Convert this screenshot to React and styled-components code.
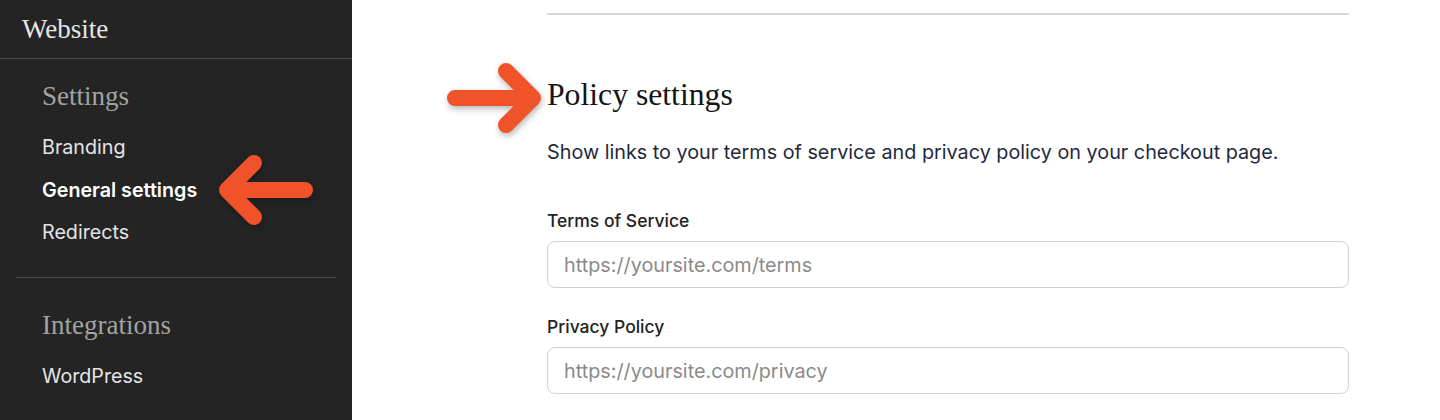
import styled, { createGlobalStyle } from 'styled-components';

const GlobalStyle = createGlobalStyle`
  html, body {
    margin: 0;
    padding: 0;
    background: #ffffff;
  }
  * { box-sizing: border-box; }
`;

const SERIF = `'Liberation Serif', 'DejaVu Serif', serif`;
const SANS = `Inter, 'Liberation Sans', sans-serif`;

const Page = styled.div`
  display: flex;
  width: 1440px;
  height: 420px;
  overflow: hidden;
  position: relative;
`;

const Sidebar = styled.aside`
  width: 352px;
  flex-shrink: 0;
  height: 100%;
  background: #242424;
  display: flex;
  flex-direction: column;
`;

const SiteTitle = styled.div`
  height: 59px;
  padding-left: 22px;
  display: flex;
  align-items: center;
  font-family: ${SERIF};
  font-size: 27px;
  color: #e6e6e6;
  border-bottom: 1px solid #4a4a4a;
`;

const Section = styled.div`
  padding: ${p => p.$pad};
  display: flex;
  flex-direction: column;
`;

const SectionTitle = styled.div`
  font-family: ${SERIF};
  font-size: 27px;
  line-height: 30px;
  color: #a3a3a3;
  margin-bottom: ${p => p.$gap}px;
`;

const NavItem = styled.a`
  font-family: ${SANS};
  font-size: 19.7px;
  line-height: 42.5px;
  color: ${p => (p.$active ? '#ffffff' : '#e4e4e4')};
  font-weight: ${p => (p.$active ? 600 : 400)};
  text-decoration: none;
`;

const Divider = styled.hr`
  margin: 0 16px;
  border: none;
  border-top: 1px solid #4a4a4a;
`;

const Main = styled.main`
  flex: 1;
  background: #ffffff;
  padding-left: 195px;
`;

const Content = styled.div`
  width: 802px;
  padding-top: 13px;
`;

const TopRule = styled.div`
  height: 2px;
  background: #dadada;
`;

const Heading = styled.h2`
  margin: 60px 0 0;
  font-family: ${SERIF};
  font-weight: 400;
  font-size: 31.7px;
  line-height: 40px;
  color: #141414;
`;

const Description = styled.p`
  margin: 24px 0 0;
  font-family: ${SANS};
  font-size: 19.8px;
  line-height: 26px;
  color: #1f2a3c;
`;

const Field = styled.div`
  margin-top: ${p => p.$top}px;
  display: flex;
  flex-direction: column;
`;

const Label = styled.label`
  font-family: ${SANS};
  font-size: 17.5px;
  font-weight: 500;
  line-height: 22px;
  color: #222222;
  margin-bottom: 9px;
`;

const Input = styled.input`
  height: 47px;
  width: 100%;
  border: 1px solid #d2d2d2;
  border-radius: 8px;
  padding: 0 16px;
  font-family: ${SANS};
  font-size: 19.8px;
  color: #222;
  background: #fff;
  outline: none;
  &::placeholder {
    color: #8a8a8a;
  }
`;

const ArrowWrap = styled.svg`
  position: absolute;
  left: ${p => p.$x}px;
  top: ${p => p.$y}px;
  overflow: visible;
  filter: drop-shadow(1px 3px 3px rgba(0, 0, 0, 0.28));
`;

function Arrow({ x, y, dir }) {
  // tip on the left for "left", on the right for "right"
  const d =
    dir === 'left'
      ? 'M86 36 H8 M35 9 L8 36 L35 63'
      : 'M8 36 H86 M59 9 L86 36 L59 63';
  return (
    <ArrowWrap $x={x} $y={y} width="94" height="72" viewBox="0 0 94 72">
      <path
        d={d}
        fill="none"
        stroke="#F0522A"
        strokeWidth="16"
        strokeLinecap="round"
        strokeLinejoin="round"
      />
    </ArrowWrap>
  );
}

export default function App() {
  return (
    <>
      <GlobalStyle />
      <Page>
        <Sidebar>
          <SiteTitle>Website</SiteTitle>
          <Section $pad="22px 42px 23px">
            <SectionTitle $gap={15}>Settings</SectionTitle>
            <NavItem>Branding</NavItem>
            <NavItem $active>General settings</NavItem>
            <NavItem>Redirects</NavItem>
          </Section>
          <Divider />
          <Section $pad="32px 42px 0">
            <SectionTitle $gap={15}>Integrations</SectionTitle>
            <NavItem>WordPress</NavItem>
          </Section>
        </Sidebar>
        <Main>
          <Content>
            <TopRule />
            <Heading>Policy settings</Heading>
            <Description>
              Show links to your terms of service and privacy policy on your checkout page.
            </Description>
            <Field $top={45}>
              <Label>Terms of Service</Label>
              <Input placeholder="https://yoursite.com/terms" />
            </Field>
            <Field $top={28}>
              <Label>Privacy Policy</Label>
              <Input placeholder="https://yoursite.com/privacy" />
            </Field>
          </Content>
        </Main>
        <Arrow x={219} y={154} dir="left" />
        <Arrow x={447} y={62} dir="right" />
      </Page>
    </>
  );
}
